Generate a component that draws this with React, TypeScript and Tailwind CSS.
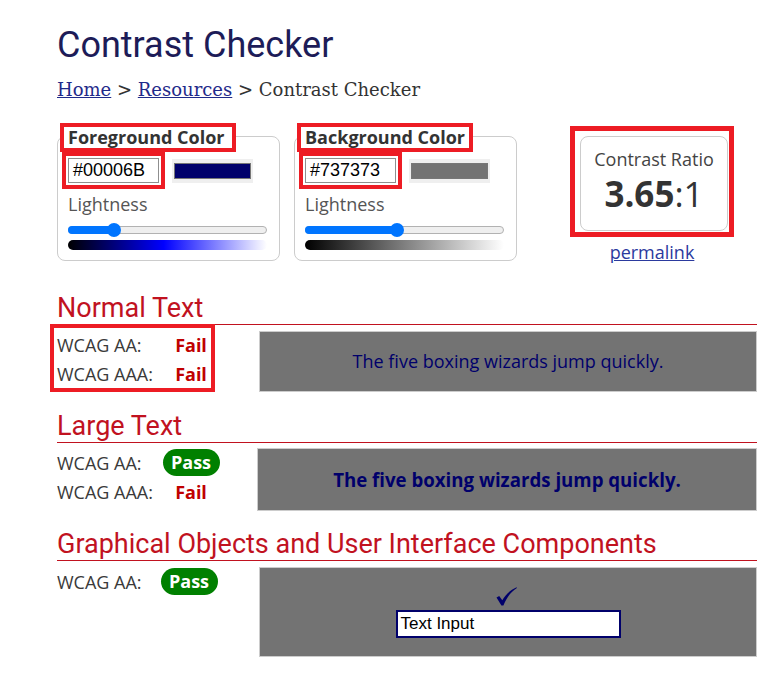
import React from "react";

function Slider({ fill, thumb }: { fill: string; thumb: string }) {
  return (
    <div className="relative mt-[7px] h-[14px]">
      <div className="absolute left-0 right-0 top-[3px] h-[8px] rounded-full border border-[#b2b2b2] bg-[#efefef]" />
      <div className={`absolute left-0 top-[3px] h-[8px] rounded-l-full bg-[#0075ff] ${fill}`} />
      <div className={`absolute top-0 h-[14px] w-[14px] rounded-full bg-[#0075ff] ${thumb}`} />
    </div>
  );
}

function ColorPanel({
  label,
  hex,
  swatch,
  fill,
  thumb,
  gradient,
  extra,
}: {
  label: string;
  hex: string;
  swatch: string;
  fill: string;
  thumb: string;
  gradient: string;
  extra: string;
}) {
  return (
    <div className={`flex flex-col ${extra}`}>
      <div className="relative z-10 ml-[3px] w-[176px] border-4 border-[#ed1c24] bg-white pl-[4px] text-[18px] leading-[21px] font-bold text-[#333] whitespace-nowrap">
        {label}
      </div>
      <div className="-mt-[16px] rounded-[8px] border border-[#cccccc] pt-[15px] pl-[10px] pr-[12px] pb-[10px]">
        <div className="flex w-[199px] items-start">
          <div className="-ml-[6px] border-4 border-[#ed1c24] p-[2px]">
            <div className="h-[25px] w-[91px] border border-[#8f8f8f] bg-white pl-[4px] font-['Liberation_Sans',Arial,sans-serif] text-[18px] leading-[23px] text-black">
              {hex}
            </div>
          </div>
          <div className="ml-[7px] mt-[7px] h-[24px] w-[81px] bg-[#efefef] px-[2px] py-[4px]">
            <div className={`h-full w-full border border-[#777] ${swatch}`} />
          </div>
        </div>
        <div className="mt-[3px] text-[18px] leading-[24px] text-[#555]">Lightness</div>
        <Slider fill={fill} thumb={thumb} />
        <div className={`mt-[3px] h-[10px] w-[199px] rounded-[5px] ${gradient}`} />
      </div>
    </div>
  );
}

function Fail() {
  return <span className="text-[18px] leading-[24px] font-bold text-[#c00000]">Fail</span>;
}

function Pass() {
  return (
    <span className="block h-[27px] w-[57px] rounded-full bg-[#008000] text-center text-[18px] leading-[27px] font-bold text-white">
      Pass
    </span>
  );
}

function Row({ label, result, lw }: { label: string; result: React.ReactNode; lw: string }) {
  return (
    <div className="flex h-[29px] items-center">
      <span className={`${lw} shrink-0 text-[18px] leading-[24px] text-[#3a3a3a] whitespace-nowrap`}>{label}</span>
      <div className="flex w-[58px] shrink-0 justify-center">{result}</div>
    </div>
  );
}

const h2 =
  "font-['Roboto',sans-serif] text-[27px] leading-[31px] font-normal text-[#c1121f] border-b border-[#c1121f] whitespace-nowrap";

export default function App() {
  return (
    <div className="min-h-[681px] w-[776px] overflow-hidden bg-white font-['Open_Sans',sans-serif] text-[#333]">
      <div className="ml-[57px] w-[700px] pt-[24px]">
        <h1 className="font-['Roboto',sans-serif] text-[36px] leading-[42px] font-normal text-[#1d1c58]">
          Contrast Checker
        </h1>
        <nav className="mt-[12px] font-['DejaVu_Serif',serif] text-[18px] leading-[24px] text-[#333]">
          <a className="text-[#1f2a8a] underline">Home</a> &gt;{" "}
          <a className="text-[#1f2a8a] underline">Resources</a> &gt; Contrast Checker
        </nav>

        <div className="mt-[21px] flex items-start">
          <ColorPanel
            label="Foreground Color"
            hex="#00006B"
            swatch="bg-[#00006b]"
            fill="w-[46px]"
            thumb="left-[39px]"
            gradient="bg-[linear-gradient(to_right,#000000,#0000ff_48%,#ffffff)]"
            extra=""
          />
          <ColorPanel
            label="Background Color"
            hex="#737373"
            swatch="bg-[#737373]"
            fill="w-[92px]"
            thumb="left-[85px]"
            gradient="bg-[linear-gradient(to_right,#000000,#ffffff)]"
            extra="ml-[14px]"
          />
          <div className="ml-[53px] mt-[3px] flex flex-col items-center">
            <div className="border-[5px] border-[#ed1c24] pt-[5px] pl-[5px] pr-[1px] pb-[1px]">
              <div className="flex h-[95px] w-[148px] flex-col items-center rounded-[8px] border border-[#cccccc] pt-[10px]">
                <div className="text-[18px] leading-[24px] text-[#444]">Contrast Ratio</div>
                <div className="mt-[3px] text-[35px] leading-[40px] text-[#333]">
                  <span className="font-bold">3.65</span>:1
                </div>
              </div>
            </div>
            <a className="mt-[3px] text-[18px] leading-[24px] text-[#2b3a9e] underline">permalink</a>
          </div>
        </div>

        <section className="mt-[29px]">
          <h2 className={h2}>Normal Text</h2>
          <div className="-mt-[1px] flex items-start">
            <div className="-ml-[7px] w-[165px] shrink-0 border-4 border-[#ed1c24] pl-[3px] pt-[2px]">
              <Row label="WCAG AA:" result={<Fail />} lw="w-[105px]" />
              <Row label="WCAG AAA:" result={<Fail />} lw="w-[105px]" />
            </div>
            <div className="ml-[44px] mt-[7px] flex h-[61px] flex-1 items-center justify-center border border-[#cccccc] bg-[#737373] text-[18px] text-[#00006b]">
              The five boxing wizards jump quickly.
            </div>
          </div>
        </section>

        <section className="mt-[19px]">
          <h2 className={h2}>Large Text</h2>
          <div className="flex items-start pt-[5px]">
            <div className="shrink-0">
              <Row label="WCAG AA:" result={<Pass />} lw="w-[105px]" />
              <Row label="WCAG AAA:" result={<Fail />} lw="w-[105px]" />
            </div>
            <div className="ml-[37px] flex h-[63px] flex-1 items-center justify-center border border-[#cccccc] bg-[#737373] text-[18.67px] font-bold text-[#00006b]">
              The five boxing wizards jump quickly.
            </div>
          </div>
        </section>

        <section className="mt-[18px]">
          <h2 className={h2}>Graphical Objects and User Interface Components</h2>
          <div className="flex items-start pt-[6px]">
            <div className="shrink-0">
              <Row label="WCAG AA:" result={<Pass />} lw="w-[103px]" />
            </div>
            <div className="ml-[41px] flex h-[90px] flex-1 flex-col items-center border border-[#cccccc] bg-[#737373] pt-[19px]">
              <svg width="21" height="19" viewBox="0 0 21 19" className="-ml-[3px]">
                <path
                  d="M0.5 10.6 L3.2 9 L6.3 13.2 C9.5 7.6 14.2 3 20.6 0.3 L20.9 0.9 C15.4 4.2 10.8 10 7.4 18.6 L5.4 18.6 Z"
                  fill="#00006b"
                />
              </svg>
              <div className="mt-[4px] h-[28px] w-[225px] border-2 border-[#00006b] bg-white pl-[3px] font-['Liberation_Sans',Arial,sans-serif] text-[17px] leading-[24px] text-black">
                Text Input
              </div>
            </div>
          </div>
        </section>

        <section className="mt-[23px]">
          <h2 className={h2}>Explanation</h2>
        </section>
      </div>
    </div>
  );
}
